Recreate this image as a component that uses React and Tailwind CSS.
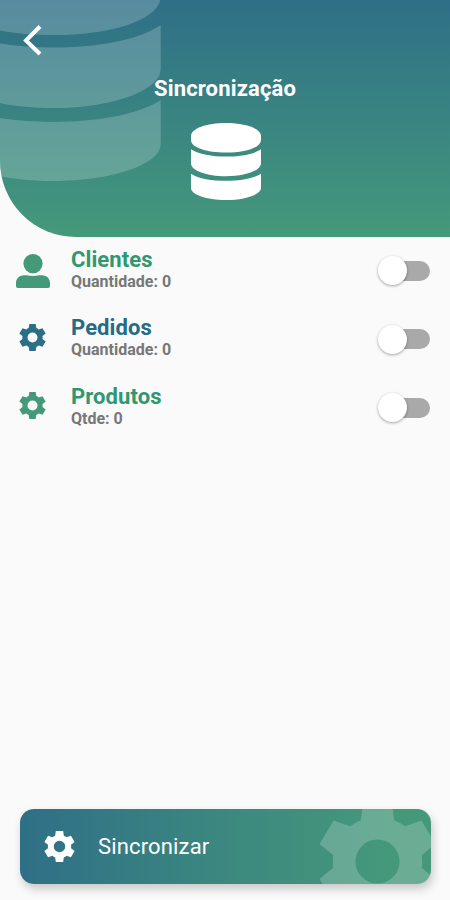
import React, { useState } from 'react';

const DatabaseIcon = ({ className }) => (
  <svg viewBox="0 0 70 77" fill="currentColor" className={className}>
    <path d="M70 13V17C70 24.5 54.5 29.6 35 29.6S0 24.5 0 17V13C0 5.5 15.5 0 35 0S70 5.5 70 13Z" />
    <path d="M70 26.3V40.5C70 47.5 54.5 53.3 35 53.3S0 47.5 0 40.5V26.3C7.5 31.4 21 33.6 35 33.6S62.5 31.4 70 26.3Z" />
    <path d="M70 50.7V65C70 71.6 54.5 77 35 77S0 71.6 0 65V50.7C7.5 55.6 21 57.8 35 57.8S62.5 55.6 70 50.7Z" />
  </svg>
);

const GearIcon = ({ className }) => (
  <svg viewBox="-58 -58 116 116" fill="currentColor" fillRule="evenodd" className={className}>
    <path d="M-16.3-40.3L-13.8-58H13.8L16.3-40.3Q22-38 26.8-34.3L42.8-39.9L56.5-17.1L43.1-6.1Q44 0 43.1 6.1L56.5 17.1L42.8 39.9L26.8 34.3Q22 38 16.3 40.3L13.8 58H-13.8L-16.3 40.3Q-22 38-26.8 34.3L-42.8 39.9L-56.5 17.1L-43.1 6.1Q-44 0-43.1-6.1L-56.5-17.1L-42.8-39.9L-26.8-34.3Q-22-38-16.3-40.3ZM0-21.5A21.5 21.5 0 1 0 0 21.5A21.5 21.5 0 1 0 0-21.5Z" />
  </svg>
);

const UserIcon = ({ className }) => (
  <svg viewBox="0 0 34 34" fill="currentColor" className={className}>
    <circle cx="17" cy="9.6" r="9.6" />
    <path d="M8.5 21.2H10.5Q17 22.8 23.5 21.2H25.5C30.8 21.2 34 24.6 34 29V32Q34 34 32 34H2Q0 34 0 32V29C0 24.6 3.2 21.2 8.5 21.2Z" />
  </svg>
);

const items = [
  { id: 'clientes', title: 'Clientes', label: 'Quantidade', count: 0, Icon: UserIcon, iconClass: 'w-[34px] h-[34px] mb-px text-[#44997a]', titleClass: 'text-[#2f9870]' },
  { id: 'pedidos', title: 'Pedidos', label: 'Quantidade', count: 0, Icon: GearIcon, iconClass: 'w-[27px] h-[27px] mb-[5px] mr-px text-[#2b6f86]', titleClass: 'text-[#256b85]' },
  { id: 'produtos', title: 'Produtos', label: 'Qtde', count: 0, Icon: GearIcon, iconClass: 'w-[27px] h-[27px] mb-[5px] mr-px text-[#44997a]', titleClass: 'text-[#2f9870]' },
];

const Toggle = ({ checked, onChange, label }) => (
  <button
    role="switch"
    aria-checked={checked}
    aria-label={label}
    onClick={onChange}
    className="flex items-center w-[51px] h-5 pl-[10px] mb-px"
  >
    <span className="flex items-center w-full h-5 rounded-full bg-[#a9a9a9]">
      <span className={`w-[29px] h-[29px] shrink-0 rounded-full bg-white shadow-[0_1px_3px_rgba(0,0,0,0.35)] ${checked ? 'ml-auto' : '-ml-[11px]'}`} />
    </span>
  </button>
);

const Header = () => (
  <header className="relative h-[237px] overflow-hidden rounded-bl-[76px] bg-linear-to-b from-[#2f6f87] to-[#45997a]">
    <DatabaseIcon className="absolute -left-[55px] -top-[56px] w-[216px] h-[237px] text-white/20" />
    <div className="relative flex flex-col items-center pt-[75px]">
      <h1 className="text-[22px] leading-7 font-bold tracking-[0.15px] text-white">Sincronização</h1>
      <DatabaseIcon className="mt-5 ml-px w-[70px] h-[77px] text-white" />
    </div>
    <button aria-label="Voltar" className="absolute left-[22px] top-6 text-white">
      <svg width="20" height="32" viewBox="0 0 20 32" fill="none" stroke="currentColor" strokeWidth="4">
        <path d="M18 2.5L4 16.5L18 30" />
      </svg>
    </button>
  </header>
);

const App = () => {
  const [selected, setSelected] = useState({});

  const toggle = (id) => setSelected((prev) => ({ ...prev, [id]: !prev[id] }));

  return (
    <div className="flex flex-col w-full h-screen bg-[#fafafa] font-[Roboto,sans-serif]">
      <Header />

      <ul className="flex-1">
        {items.map(({ id, title, label, count, Icon, iconClass, titleClass }) => (
          <li key={id} className="flex items-center h-[68.5px] pr-5">
            <div className="flex justify-center w-[66px]">
              <Icon className={iconClass} />
            </div>
            <div className="flex-1 pl-[5px] pb-1">
              <h2 className={`text-[22px] leading-6 font-bold tracking-[0.1px] ${titleClass}`}>{title}</h2>
              <p className="text-base leading-[19px] font-bold text-[#777]">{label}: {count}</p>
            </div>
            <Toggle checked={!!selected[id]} onChange={() => toggle(id)} label={title} />
          </li>
        ))}
      </ul>

      <div className="pl-5 pr-[19px] pb-4">
        <button className="relative flex items-center w-full h-[75px] pl-6 overflow-hidden rounded-[14px] bg-linear-to-r from-[#2f6f87] via-[#3c887f] via-50% to-[#45997a] to-90% shadow-[2px_5px_10px_rgba(0,0,0,0.2)] text-white">
          <GearIcon className="w-[31px] h-[31px]" />
          <span className="ml-[23px] text-[22px] tracking-[0.15px]">Sincronizar</span>
          <GearIcon className="absolute left-[298px] -top-[7px] w-[119px] h-[119px] text-white/20" />
        </button>
      </div>
    </div>
  );
};

export default App;
